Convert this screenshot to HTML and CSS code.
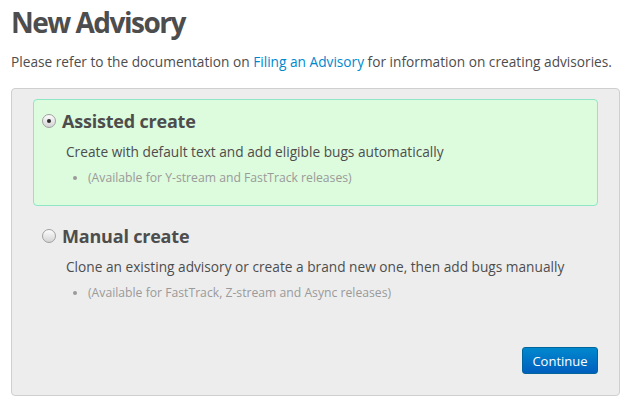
FILE: index.html
```html
<!DOCTYPE html>
<html>
<head>
<meta charset="utf-8">
<link rel="stylesheet" href="styles.css">
</head>
<body>
<div class="page">
  <h1 class="title">New Advisory</h1>
  <p class="intro">Please refer to the documentation on <a class="link" href="#">Filing an Advisory</a> for information on creating advisories.</p>
  <div class="panel">
    <div class="option selected">
      <label class="option-head"><span class="radio checked"></span><span class="option-title">Assisted create</span></label>
      <div class="option-desc">Create with default text and add eligible bugs automatically</div>
      <ul class="notes"><li>(Available for Y-stream and FastTrack releases)</li></ul>
    </div>
    <div class="option">
      <label class="option-head"><span class="radio"></span><span class="option-title">Manual create</span></label>
      <div class="option-desc">Clone an existing advisory or create a brand new one, then add bugs manually</div>
      <ul class="notes"><li>(Available for FastTrack, Z-stream and Async releases)</li></ul>
    </div>
    <div class="actions"><button class="btn-primary">Continue</button></div>
  </div>
</div>
</body>
</html>
```
FILE: styles.css
```css
html, body { margin: 0; padding: 0; background: #fff; }
body { font-family: "Open Sans", "Noto Sans", sans-serif; color: #4d4d4d; }
.page { padding: 0 20px 0 11px; }
.title { margin: 0; padding-top: 2px; font-size: 28px; font-weight: 700; letter-spacing: -1.5px; color: #4d4d4d; line-height: 40px; }
.intro { margin: 10px 0 0; font-size: 13.7px; line-height: 20px; color: #4d4d4d; white-space: nowrap; }
.link { color: #0088ce; text-decoration: none; }
.panel { margin-top: 16px; background: #ededed; border: 1px solid #cfcfcf; border-radius: 4px; padding: 10px 21px 21px; height: 275px; box-sizing: content-box; display: flex; flex-direction: column; }
.option { border: 1px solid transparent; border-radius: 4px; padding: 9px 8px 19px; }
.option.selected { background: #ddfbdd; border-color: #8ee6c6; }
.option + .option { margin-top: 8px; }
.option-head { display: flex; align-items: center; gap: 6px; }
.radio { width: 12px; height: 12px; border-radius: 50%; border: 1px solid #a0a0a0; background: linear-gradient(#fcfcfc, #d4d4d4); display: flex; align-items: center; justify-content: center; flex: none; }
.radio.checked::after { content: ""; width: 4px; height: 4px; border-radius: 50%; background: #2e2e2e; }
.option-title { font-size: 18px; font-weight: 700; line-height: 24px; color: #4d4d4d; letter-spacing: -0.2px; }
.option-desc { margin: 10px 0 0 24px; font-size: 13.7px; line-height: 18px; }
.notes { margin: 9px 0 0 34px; padding: 0 0 0 12px; font-size: 12.2px; line-height: 16px; color: #9a9a9a; list-style: disc; }
.actions { margin-top: auto; display: flex; justify-content: flex-end; }
.btn-primary { font-family: "Open Sans", "Noto Sans", sans-serif; font-size: 13px; color: #fff; background: linear-gradient(#0088ce, #005fbe); border: 1px solid #00659c; border-radius: 3px; height: 27px; width: 76px; padding: 0; }
```
